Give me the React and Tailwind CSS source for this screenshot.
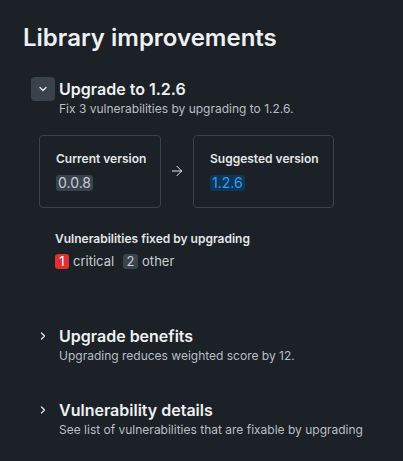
import { ChevronDown, ChevronRight, ArrowRight } from 'lucide-react'

function Section({ title, subtitle, open, children }) {
  return (
    <div className="flex gap-1">
      <div className="flex h-6 w-6 shrink-0 items-center justify-center">
        {open ? (
          <span className="flex h-6 w-6 items-center justify-center rounded bg-[#3a434b]">
            <ChevronDown size={12} strokeWidth={2.5} className="text-[#e6e9ec]" />
          </span>
        ) : (
          <ChevronRight size={12} strokeWidth={2.5} className="text-[#e6e9ec]" />
        )}
      </div>
      <div className="min-w-0">
        <h3 className="text-[16px] font-semibold leading-6 text-[#eef0f2]">{title}</h3>
        <p className="text-[12px] leading-4 text-[#b9bfc5]">{subtitle}</p>
        {children}
      </div>
    </div>
  )
}

export default function App() {
  return (
    <main className="min-h-screen bg-[#1b2126] px-[23px] pt-[22px] font-['Inter',sans-serif] text-[#eef0f2]">
      <h1 className="text-[24px] font-semibold leading-8 text-[#eef0f2]">Library improvements</h1>

      <div className="mt-[23px] pl-2">
        <Section title="Upgrade to 1.2.6" subtitle="Fix 3 vulnerabilities by upgrading to 1.2.6." open>
          <div className="-ml-5 mt-[18px] flex items-center gap-2">
            <div className="h-[73px] w-[122px] rounded border border-[#3a424a] px-4 pt-[15px]">
              <p className="whitespace-nowrap text-[12px] font-semibold leading-4 text-[#e3e6e9]">Current version</p>
              <span className="mt-[8px] inline-block rounded-[3px] bg-[#3a434b] px-[2px] text-[14px] leading-4 text-[#c9ced3]">0.0.8</span>
            </div>
            <ArrowRight size={16} strokeWidth={1.5} className="-mt-[2px] text-[#e6e9ec]" />
            <div className="h-[73px] w-[141px] rounded border border-[#3a424a] px-4 pt-[15px]">
              <p className="whitespace-nowrap text-[12px] font-semibold leading-4 text-[#e3e6e9]">Suggested version</p>
              <span className="mt-[8px] inline-block rounded-[3px] bg-[#0c375a] px-[2px] text-[14px] leading-4 text-[#3d9be6]">1.2.6</span>
            </div>
          </div>

          <div className="-ml-1 mt-[23px]">
            <p className="text-[12px] font-semibold leading-4 text-[#e3e6e9]">Vulnerabilities fixed by upgrading</p>
            <div className="mt-[7px] flex items-center gap-[9px] text-[13px] leading-[15px] text-[#c9ced3]">
              <span className="flex items-center gap-1">
                <span className="w-[14px] rounded-[3px] bg-[#e0302f] text-center text-white">1</span>
                critical
              </span>
              <span className="flex items-center gap-1">
                <span className="w-[15px] rounded-[3px] bg-[#3a434b] text-center text-[#c9ced3]">2</span>
                other
              </span>
            </div>
          </div>
        </Section>

        <div className="mt-[55px]">
          <Section title="Upgrade benefits" subtitle="Upgrading reduces weighted score by 12." />
        </div>
        <div className="mt-[34px]">
          <Section
            title="Vulnerability details"
            subtitle="See list of vulnerabilities that are fixable by upgrading"
          />
        </div>
      </div>
    </main>
  )
}
